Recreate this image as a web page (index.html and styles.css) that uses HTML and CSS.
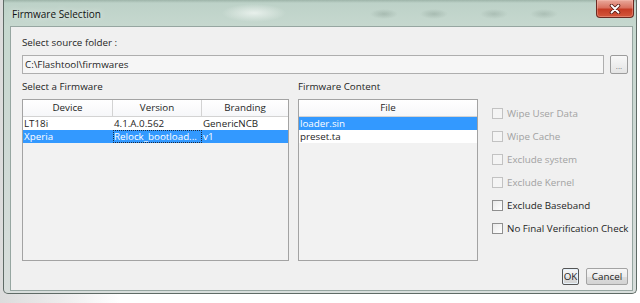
FILE: index.html
```html
<!DOCTYPE html>
<html lang="en">
<head>
    <meta charset="UTF-8">
    <meta name="viewport" content="width=device-width, initial-scale=1.0">
    <title>Firmware Selection</title>
    <link rel="stylesheet" href="styles.css">
</head>
<body>
    <div class="window">
        <div class="titlebar">
            <span class="title">Firmware Selection</span>
            <button class="close-btn" title="Close">
                <svg width="12" height="10" viewBox="0 0 12 10">
                    <path d="M2.5 1.5 L9.5 8.5 M9.5 1.5 L2.5 8.5" stroke="#5a2018" stroke-width="3.6" stroke-linecap="round"/>
                    <path d="M2.5 1.5 L9.5 8.5 M9.5 1.5 L2.5 8.5" stroke="#fff" stroke-width="1.8" stroke-linecap="round"/>
                </svg>
            </button>
        </div>

        <div class="client">
            <div class="label">Select source folder :</div>
            <div class="folder-row">
                <div class="textbox">C:\Flashtool\firmwares</div>
                <button class="browse-btn">...</button>
            </div>

            <div class="main">
                <div class="pane">
                    <div class="label">Select a Firmware</div>
                    <div class="list list-firmware">
                        <div class="row head">
                            <div class="cell c-device">Device</div>
                            <div class="cell c-version">Version</div>
                            <div class="cell c-branding">Branding</div>
                        </div>
                        <div class="row">
                            <div class="cell c-device">LT18i</div>
                            <div class="cell c-version">4.1.A.0.562</div>
                            <div class="cell c-branding">GenericNCB</div>
                        </div>
                        <div class="row selected">
                            <div class="cell c-device">Xperia</div>
                            <div class="cell c-version focus">Relock_bootload...</div>
                            <div class="cell c-branding">v1</div>
                        </div>
                    </div>
                </div>

                <div class="pane">
                    <div class="label">Firmware Content</div>
                    <div class="list list-content">
                        <div class="row head">
                            <div class="cell c-file">File</div>
                        </div>
                        <div class="row selected">
                            <div class="cell c-file">loader.sin</div>
                        </div>
                        <div class="row">
                            <div class="cell c-file">preset.ta</div>
                        </div>
                    </div>
                </div>

                <div class="options">
                    <label class="option disabled"><span class="box"></span>Wipe User Data</label>
                    <label class="option disabled"><span class="box"></span>Wipe Cache</label>
                    <label class="option disabled"><span class="box"></span>Exclude system</label>
                    <label class="option disabled"><span class="box"></span>Exclude Kernel</label>
                    <label class="option"><span class="box"></span>Exclude Baseband</label>
                    <label class="option"><span class="box"></span>No Final Verification Check</label>
                </div>
            </div>

            <div class="actions">
                <button class="btn btn-default">OK</button>
                <button class="btn btn-cancel">Cancel</button>
            </div>
        </div>
    </div>
</body>
</html>
```

FILE: styles.css
```css
html, body {
    margin: 0;
    padding: 0;
}
body {
    width: 640px;
    height: 303px;
    overflow: hidden;
    font-family: 'Open Sans', sans-serif;
    font-size: 9.8px;
    color: #1e1e1e;
    background: linear-gradient(to right, #dcdcdc 0, #ececec 60px, #ffffff 120px);
}
.window {
    margin-left: 3px;
    width: 634px;
    height: 294px;
    box-sizing: border-box;
    border: 1px solid #5f6b66;
    border-top: none;
    border-radius: 0 0 5px 5px;
    background: linear-gradient(to bottom, #bcd1c7 0, #c6d8cf 26px, #ccd8d3 120px, #d8dedc 100%);
    display: flex;
    flex-direction: column;
}
.titlebar {
    height: 26px;
    display: flex;
    justify-content: space-between;
    align-items: flex-start;
    background:
        linear-gradient(to bottom, rgba(120,145,132,.45) 0, rgba(120,145,132,0) 3px),
        radial-gradient(ellipse 32px 9px at 250px 13px, rgba(236,243,239,.9), rgba(236,243,239,0)),
        radial-gradient(ellipse 14px 5px at 380px 14px, rgba(120,140,130,.35), rgba(120,140,130,0)),
        radial-gradient(ellipse 14px 5px at 430px 14px, rgba(120,140,130,.35), rgba(120,140,130,0)),
        radial-gradient(ellipse 14px 5px at 490px 14px, rgba(120,140,130,.3), rgba(120,140,130,0)),
        radial-gradient(ellipse 14px 5px at 540px 14px, rgba(120,140,130,.3), rgba(120,140,130,0));
}
.title {
    padding: 7px 0 0 8px;
    line-height: 14px;
    font-size: 10px;
    color: #111;
    text-shadow: 0 0 6px rgba(255,255,255,.9);
}
.close-btn {
    width: 38px;
    height: 18px;
    margin-right: 2px;
    padding: 0;
    border: 1px solid #6b2a22;
    border-top: none;
    border-radius: 0 0 4px 4px;
    background: linear-gradient(to bottom, #e9a99b 0, #d9715f 45%, #c53c25 55%, #d4573c 100%);
    box-shadow: inset 0 0 0 1px rgba(255,200,190,.35);
    display: flex;
    align-items: center;
    justify-content: center;
}
.client {
    height: 265px;
    margin: 0 3px 0 6px;
    box-sizing: border-box;
    border: 1px solid #96a6a1;
    background: #f0f0f0;
    padding: 9px 4px 5px 11px;
    display: flex;
    flex-direction: column;
}
.label {
    line-height: 14px;
    white-space: nowrap;
}
.folder-row {
    margin-top: 5px;
    height: 19px;
    display: flex;
    gap: 6px;
}
.textbox {
    flex: 1;
    box-sizing: border-box;
    border: 1px solid #aeaeae;
    background: #f6f6f6;
    padding-left: 2px;
    line-height: 17px;
}
.browse-btn {
    width: 18px;
    height: 19px;
    padding: 0 0 3px;
    border: 1px solid #9c9c9c;
    border-radius: 2px;
    background: linear-gradient(to bottom, #f8f8f8, #e4e4e4);
    color: #7a7a7a;
    font-family: inherit;
    font-size: 8px;
    line-height: 8px;
    display: flex;
    align-items: flex-end;
    justify-content: center;
}
.main {
    margin-top: 6px;
    display: flex;
}
.pane {
    display: flex;
    flex-direction: column;
    gap: 5px;
}
.pane + .pane {
    margin-left: 9px;
}
.list {
    height: 162px;
    box-sizing: border-box;
    border: 1px solid #a3a3a3;
    background: #f2f2f2;
}
.list-firmware {
    width: 267px;
}
.list-content {
    width: 180px;
}
.row {
    display: flex;
    height: 13px;
    line-height: 13px;
    background: #fff;
    white-space: nowrap;
}
.row.head {
    height: 16px;
    line-height: 16px;
    border-bottom: 1px solid #d3d3d3;
    background: linear-gradient(to bottom, #ffffff, #f6f7f9);
}
.cell {
    box-sizing: border-box;
    padding-left: 1px;
    overflow: hidden;
}
.head .cell {
    text-align: center;
    border-right: 1px solid #d3d3d3;
    padding-left: 0;
}
.head .cell:last-child {
    border-right: none;
}
.c-device {
    width: 90px;
}
.c-version {
    width: 89px;
}
.c-branding {
    flex: 1;
}
.c-file {
    flex: 1;
}
.row.selected {
    background: #3399ff;
    color: #fff;
}
.cell.focus {
    outline: 1px dotted #1a2a40;
    outline-offset: -1px;
}
.options {
    margin-left: 14px;
    padding-top: 22px;
    display: flex;
    flex-direction: column;
}
.option {
    height: 23px;
    display: flex;
    align-items: center;
    gap: 4px;
    white-space: nowrap;
}
.box {
    width: 11px;
    height: 11px;
    box-sizing: border-box;
    border: 1px solid #8f8f8f;
    background: linear-gradient(135deg, #e9e9e9, #ffffff);
}
.option.disabled {
    color: #a2a2a2;
}
.option.disabled .box {
    border-color: #c2c2c2;
    background: #f4f4f4;
}
.actions {
    margin-top: 7px;
    display: flex;
    justify-content: flex-end;
    gap: 7px;
}
.btn {
    height: 17px;
    padding: 0;
    border: 1px solid #a3a3a3;
    border-radius: 2px;
    background: linear-gradient(to bottom, #f7f7f7 0, #ececec 50%, #dddddd 51%, #d3d3d3 100%);
    font-family: inherit;
    font-size: 9.8px;
    line-height: 14px;
    color: #1e1e1e;
}
.btn-default {
    width: 17px;
    border-color: #555;
    box-shadow: inset 0 0 0 1px #e8f2fa;
}
.btn-cancel {
    width: 42px;
}
```
